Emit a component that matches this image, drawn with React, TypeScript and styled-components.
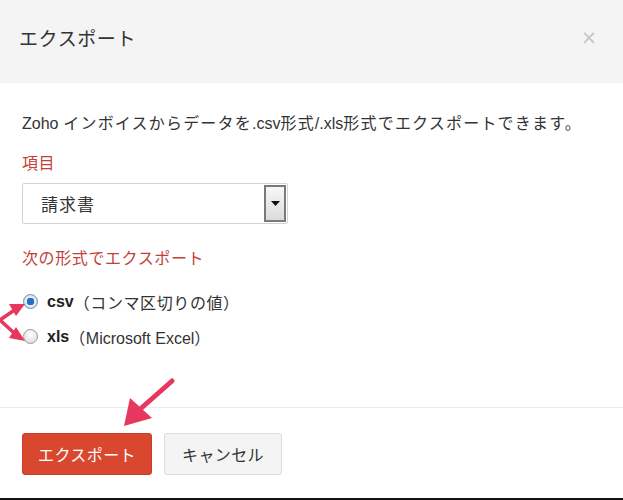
import React, { useState } from "react";
import styled, { createGlobalStyle } from "styled-components";

const GlobalStyle = createGlobalStyle`
  html, body {
    margin: 0;
    padding: 0;
    background: #ffffff;
  }
  body {
    font-family: "Noto Sans CJK JP", "Noto Sans", "Liberation Sans", sans-serif;
    color: #333;
  }
`;

const JP = `"Noto Sans CJK JP", "Noto Sans", sans-serif`;

const Modal = styled.div`
  position: relative;
  width: 623px;
  height: 500px;
  box-sizing: border-box;
  display: flex;
  flex-direction: column;
  background: #fff;
  border-bottom: 2px solid #111;
  overflow: hidden;
`;

const Header = styled.div`
  height: 83px;
  flex: none;
  box-sizing: border-box;
  background: #f4f4f4;
  display: flex;
  align-items: center;
  justify-content: space-between;
  padding: 0 26px 8px 19px;
`;

const Title = styled.h2`
  margin: 0;
  font-family: ${JP};
  font-weight: 400;
  font-size: 19px;
  color: #333;
  letter-spacing: 0.6px;
`;

const Close = styled.span`
  font-family: "DejaVu Sans", sans-serif;
  font-size: 19px;
  color: #c4c4c4;
  line-height: 1;
  cursor: pointer;
`;

const Body = styled.div`
  height: 324px;
  flex: none;
  box-sizing: border-box;
  padding: 29px 22px 0;
  display: flex;
  flex-direction: column;
`;

const Description = styled.p`
  margin: 0;
  font-size: 16px;
  line-height: 20px;
  letter-spacing: 1.2px;
  color: #333;
  white-space: nowrap;
`;

const Latin = styled.span`
  font-family: "Liberation Sans", sans-serif;
  letter-spacing: 0;
`;

const FieldLabel = styled.div<{ $top: number }>`
  margin-top: ${(p) => p.$top}px;
  font-size: 16px;
  line-height: 20px;
  color: #c23f3a;
  letter-spacing: 0.6px;
`;

const SelectBox = styled.div`
  margin-top: 11px;
  width: 266px;
  height: 41px;
  box-sizing: border-box;
  border: 1px solid #d4d4d4;
  border-radius: 2px;
  display: flex;
  align-items: center;
  justify-content: space-between;
  padding: 1px 1px 1px 18px;
  background: #fff;
`;

const SelectValue = styled.span`
  font-size: 17px;
  color: #333;
  letter-spacing: 1px;
`;

const DropButton = styled.span`
  width: 22px;
  height: 37px;
  box-sizing: border-box;
  border: 2px solid #7a7a7a;
  background: linear-gradient(#f7f7f7, #dcdcdc);
  display: flex;
  align-items: center;
  justify-content: center;
`;

const RadioGroup = styled.div`
  margin-top: 24px;
  display: flex;
  flex-direction: column;
  gap: 14px;
`;

const RadioRow = styled.label`
  display: flex;
  align-items: center;
  padding-left: 1px;
  height: 21px;
  font-size: 16px;
  color: #333;
  cursor: pointer;
`;

const RadioInput = styled.input`
  appearance: none;
  margin: 0 9px 0 0;
  width: 15px;
  height: 15px;
  border-radius: 50%;
  border: 1px solid #9a9a9a;
  background: radial-gradient(circle at 50% 35%, #ffffff, #d6d6d6);
  box-sizing: border-box;
  flex: none;
  &:checked {
    background: radial-gradient(circle, #1e74c8 0 3px, #2a5f9a 3.5px, #e8eef4 4px, #d6dde4 7px);
    border-color: #6d8fb3;
  }
`;

const Strong = styled.b`
  font-family: "Liberation Sans", sans-serif;
  font-weight: 700;
  font-size: 16px;
  color: #222;
`;

const RadioText = styled.span`
  letter-spacing: 0.6px;
`;

const Footer = styled.div`
  flex: 1;
  border-top: 1px solid #ebebeb;
  padding: 25px 22px 0;
  display: flex;
  align-items: flex-start;
  gap: 12px;
`;

const Button = styled.button<{ $primary?: boolean }>`
  height: 42px;
  box-sizing: border-box;
  border-radius: 3px;
  font-family: ${JP};
  font-size: 16px;
  letter-spacing: 0.4px;
  white-space: nowrap;
  cursor: pointer;
  padding: 0;
  width: ${(p) => (p.$primary ? 130 : 118)}px;
  border: 1px solid ${(p) => (p.$primary ? "#c93e27" : "#dcdcdc")};
  background: ${(p) => (p.$primary ? "#d9472f" : "#f4f4f4")};
  color: ${(p) => (p.$primary ? "#fff" : "#333")};
`;

const Overlay = styled.svg`
  position: absolute;
  left: 0;
  top: 0;
  pointer-events: none;
`;

function Arrows() {
  const c = "#e8375f";
  return (
    <Overlay width={623} height={500} viewBox="0 0 623 500">
      {/* small arrows pointing at radio buttons */}
      <path d="M0 320 L13 311" stroke={c} strokeWidth={3.5} strokeLinecap="round" />
      <polygon points="25,304 9,304 16,316" fill={c} />
      <path d="M0 320 L13 332" stroke={c} strokeWidth={3.5} strokeLinecap="round" />
      <polygon points="25,341 16,327 9,338" fill={c} />
      {/* large arrow to export button */}
      <path d="M172 381 L138 411" stroke={c} strokeWidth={5} strokeLinecap="round" />
      <polygon points="124,426 130,398 152,418" fill={c} />
    </Overlay>
  );
}

export default function App() {
  const [format, setFormat] = useState("csv");

  return (
    <>
      <GlobalStyle />
      <Modal>
        <Header>
          <Title>エクスポート</Title>
          <Close>×</Close>
        </Header>
        <Body>
          <Description>
            <Latin>Zoho</Latin> インボイスからデータを<Latin>.csv</Latin>形式<Latin>/.xls</Latin>
            形式でエクスポートできます。
          </Description>
          <FieldLabel $top={18}>項目</FieldLabel>
          <SelectBox>
            <SelectValue>請求書</SelectValue>
            <DropButton>
              <svg width="9" height="5" viewBox="0 0 9 5">
                <polygon points="0,0 9,0 4.5,5" fill="#111" />
              </svg>
            </DropButton>
          </SelectBox>
          <FieldLabel $top={23}>次の形式でエクスポート</FieldLabel>
          <RadioGroup>
            <RadioRow>
              <RadioInput
                type="radio"
                name="format"
                checked={format === "csv"}
                onChange={() => setFormat("csv")}
              />
              <Strong>csv</Strong>
              <RadioText>（コンマ区切りの値）</RadioText>
            </RadioRow>
            <RadioRow>
              <RadioInput
                type="radio"
                name="format"
                checked={format === "xls"}
                onChange={() => setFormat("xls")}
              />
              <Strong>xls</Strong>
              <RadioText>
                （<Latin>Microsoft Excel</Latin>）
              </RadioText>
            </RadioRow>
          </RadioGroup>
        </Body>
        <Footer>
          <Button $primary>エクスポート</Button>
          <Button>キャンセル</Button>
        </Footer>
        <Arrows />
      </Modal>
    </>
  );
}
